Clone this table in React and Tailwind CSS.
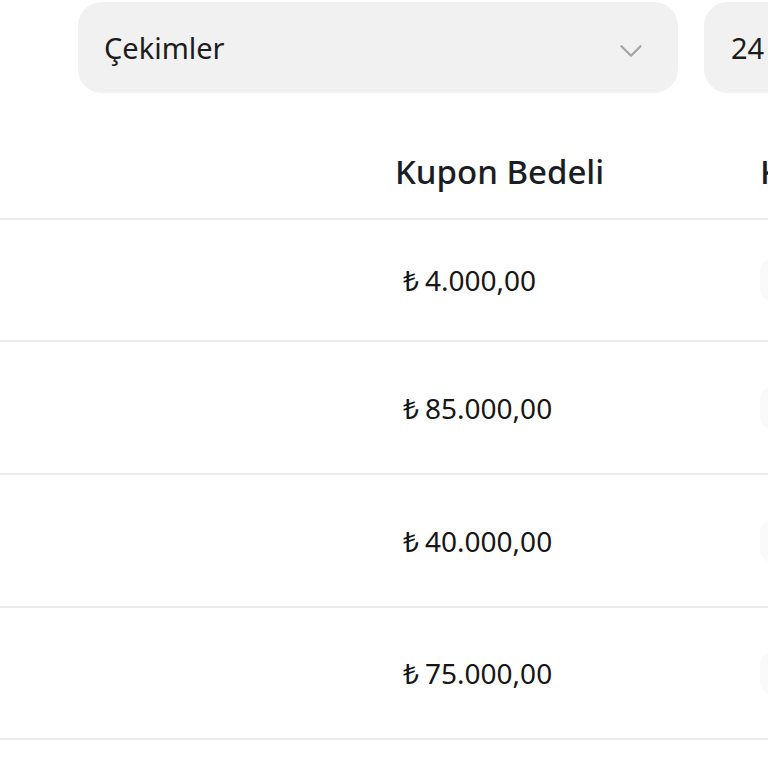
import { ChevronDown } from 'lucide-react';

const rows = [
  { amount: '4.000,00', h: 'h-[122px]' },
  { amount: '85.000,00', h: 'h-[133px]' },
  { amount: '40.000,00', h: 'h-[133px]' },
  { amount: '75.000,00', h: 'h-[132px]' },
];

function Select({ label, className }) {
  return (
    <div className={`flex h-[91px] shrink-0 items-center rounded-[24px] bg-[#f1f1f1] ${className}`}>
      <span className="text-[29px] text-[#1c1c1c]">{label}</span>
    </div>
  );
}

export default function App() {
  return (
    <div className="h-[768px] w-[768px] overflow-hidden bg-white font-['Noto_Sans',sans-serif]">
      {/* filtreler */}
      <div className="flex gap-[26px] pl-[78px] pt-[2px]">
        <div className="flex h-[91px] w-[600px] shrink-0 items-center justify-between rounded-[24px] bg-[#f1f1f1] pl-[26px] pr-[28px]">
          <span className="text-[29px] leading-none text-[#1c1c1c]">Çekimler</span>
          <ChevronDown className="mt-[6px] h-[38px] w-[38px] text-[#a3a3a3]" strokeWidth={1.4} />
        </div>
        <Select label="24" className="w-[200px] pl-[27px]" />
      </div>

      {/* tablo */}
      <div className="mt-[27px] w-[1000px]">
        <div className="flex h-[100px] items-center border-b-2 border-[#ececec] pt-[6px]">
          <div className="w-[395px] shrink-0" />
          <div className="w-[365px] shrink-0 text-[33px] font-medium text-[#1a1d24]">Kupon Bedeli</div>
          <div className="shrink-0 text-[33px] font-medium text-[#1a1d24]">Kupon</div>
        </div>
        {rows.map((r) => (
          <div key={r.amount} className={`flex ${r.h} items-center border-b-2 border-[#ececec]`}>
            <div className="w-[403px] shrink-0" />
            <div className="flex w-[357px] shrink-0 items-center text-[28px] text-[#161616]">
              <span className="mr-[6px]">₺</span>
              <span>{r.amount}</span>
            </div>
            <div className="h-[44px] w-[60px] shrink-0 rounded-[14px] bg-[#fafafa]" />
          </div>
        ))}
      </div>
    </div>
  );
}
